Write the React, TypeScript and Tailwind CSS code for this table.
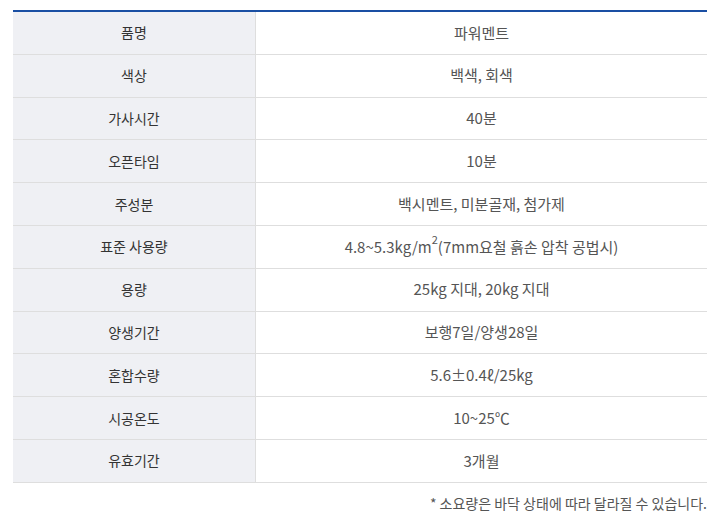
import React from 'react';

const rows: { label: string; value: React.ReactNode }[] = [
  { label: '품명', value: '파워멘트' },
  { label: '색상', value: '백색, 회색' },
  { label: '가사시간', value: '40분' },
  { label: '오픈타임', value: '10분' },
  { label: '주성분', value: '백시멘트, 미분골재, 첨가제' },
  {
    label: '표준 사용량',
    value: (
      <>
        4.8~5.3kg/m<span className="inline-block align-top text-[11px] leading-none -mt-[2px]">2</span>(7mm요철 흙손 압착 공법시)
      </>
    ),
  },
  { label: '용량', value: '25kg 지대, 20kg 지대' },
  { label: '양생기간', value: '보행7일/양생28일' },
  { label: '혼합수량', value: '5.6±0.4ℓ/25kg' },
  { label: '시공온도', value: '10~25℃' },
  { label: '유효기간', value: '3개월' },
];

const App: React.FC = () => {
  return (
    <div className="w-[720px] h-[521px] bg-white pt-[10px] px-[13px] font-['Noto_Sans_CJK_KR','Noto_Sans',sans-serif]">
      <div className="border-t-2 border-[#1a4fa3]">
        {rows.map((row) => (
          <div key={row.label} className="flex h-[42.8px] border-b border-[#dedede]">
            <div className="w-[243px] bg-[#eff0f4] border-r border-[#dedede] flex items-center justify-center text-[14px] text-[#333]">
              {row.label}
            </div>
            <div className="flex-1 flex items-center justify-center text-[15px] text-[#555]">
              <span>{row.value}</span>
            </div>
          </div>
        ))}
      </div>
      <p className="mt-[10px] text-right text-[14px] text-[#555]">* 소요량은 바닥 상태에 따라 달라질 수 있습니다.</p>
    </div>
  );
};

export default App;
